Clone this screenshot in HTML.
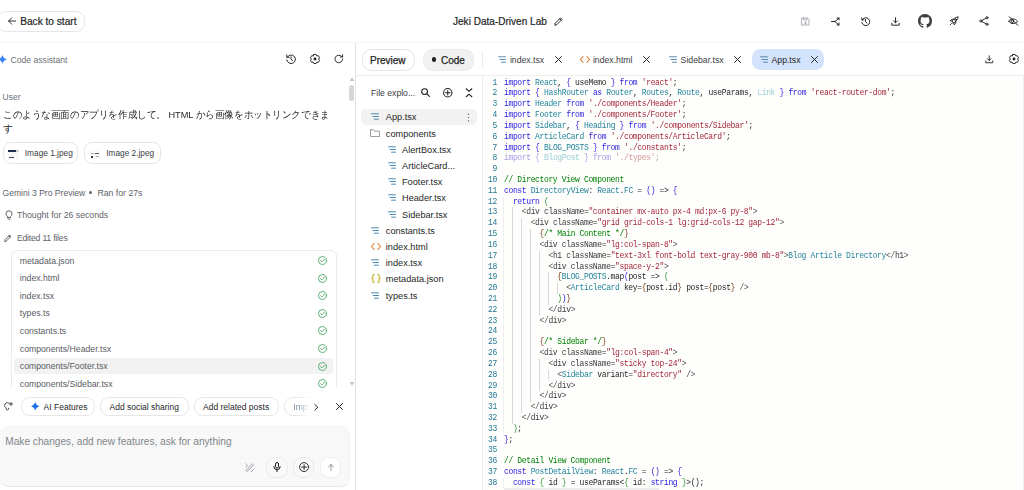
<!DOCTYPE html>
<html><head><meta charset="utf-8">
<style>
*{box-sizing:border-box;margin:0;padding:0}
html,body{width:1024px;height:490px;overflow:hidden;background:#fff;font-family:"Liberation Sans",sans-serif;color:#1f1f1f}
.a{position:absolute}
svg{position:absolute;display:block;overflow:visible}
.ic{fill:none;stroke:#1f1f1f;stroke-width:0.95;stroke-linecap:round;stroke-linejoin:round}
.t{position:absolute;white-space:pre;line-height:1}
.chip{position:absolute;border:1px solid #e6e6e6;border-radius:9.5px;background:#fff}
/* left file list */
.fr{position:absolute;left:19.8px;font-size:8.7px;color:#585c61;white-space:pre;line-height:1}
.ck{position:absolute;left:318px}
/* tree */
.tr{position:absolute;font-size:9.2px;color:#1f1f1f;white-space:pre;line-height:1}
/* code */
#code{position:absolute;left:483px;top:77.7px;width:541px;height:414px;font-family:"Liberation Mono",monospace;font-size:8px;letter-spacing:-0.36px}
.ln,.cl{transform:scale(1,1.06);transform-origin:0 60%}
.ln{position:absolute;left:0;width:14px;text-align:right;color:#237893}
.cl{position:absolute;left:21px;white-space:pre;color:#1f1f1f}
.k{color:#2f22e0}.i{color:#23839a}.s{color:#a3273a}.c{color:#008000}.tg{color:#555}.b1{color:#319331}.b2{color:#2f22e0}.b3{color:#7b3814}.at{color:#3b3b3b}
.fk{color:#a99ee8}.fi{color:#9ccfd4}.fb{color:#a99ee8}.fs{color:#d49a9a}.fp{color:#999}
.g{position:absolute;width:1px;background:#d8d8d8}.g0{background:#efefef}
</style></head><body>

<!-- ================= HEADER ================= -->
<div class="a" style="left:0;top:42px;width:1024px;height:1px;background:#f6f6f6"></div>
<div class="chip" style="left:-3px;top:10.5px;width:88.3px;height:21.2px;border-radius:9px"></div>
<svg class="ic" style="left:7.5px;top:17px;stroke-width:1;stroke:#333" width="8" height="8" viewBox="0 0 8 8"><path d="M7.6 4H0.6M3.8 0.8L0.6 4L3.8 7.2"/></svg>
<div class="t" style="left:20.2px;top:16.5px;font-size:10.15px;-webkit-text-stroke:0.2px #1f1f1f">Back to start</div>
<div class="t" style="left:453px;top:16.5px;font-size:10.05px;-webkit-text-stroke:0.2px #1f1f1f">Jeki Data-Driven Lab</div>
<svg class="ic" style="left:553.5px;top:17px" width="9" height="9" viewBox="0 0 9 9"><path d="M1 8L1.3 6.2L6.6 0.9L8.1 2.4L2.8 7.7Z M5.6 1.9L7.1 3.4"/></svg>

<!-- header right icons -->
<svg class="ic" style="left:801px;top:16.5px;stroke:#a8abb0" width="9" height="9" viewBox="0 0 9 9"><path d="M1 1H6.5L8 2.5V8H1Z M2.5 1V3H6V1 M4.5 5V7 M3.5 6H5.5"/></svg>
<svg class="ic" style="left:830.5px;top:16.5px" width="9" height="9" viewBox="0 0 9 9"><path d="M0.5 4.5H4L8 1 M8 8L4 4.5 M6 1H8V3 M8 6V8H6"/></svg>
<svg class="ic" style="left:860.5px;top:16.5px" width="9" height="9" viewBox="0 0 9 9"><path d="M1.2 2.8A4 4 0 1 1 0.8 5.5 M0.8 0.8V2.9H2.9 M4.5 2.5V4.7L6 6"/></svg>
<svg class="ic" style="left:890.5px;top:16.5px" width="9" height="9" viewBox="0 0 9 9"><path d="M4.5 0.8V5.8 M2.5 3.8L4.5 5.8L6.5 3.8 M0.8 6.3V8.2H8.2V6.3"/></svg>
<svg style="left:917.8px;top:14.3px" width="14" height="14" viewBox="0 0 16 16"><path fill="#3c4043" d="M8 0C3.58 0 0 3.58 0 8c0 3.54 2.29 6.53 5.47 7.59.4.07.55-.17.55-.38 0-.19-.01-.82-.01-1.49-2.01.37-2.53-.49-2.69-.94-.09-.23-.48-.94-.82-1.13-.28-.15-.68-.52-.01-.53.63-.01 1.08.58 1.23.82.72 1.21 1.87.87 2.33.66.07-.52.28-.87.51-1.07-1.780-.2-3.64-.89-3.64-3.95 0-.87.31-1.59.82-2.15-.08-.2-.36-1.02.08-2.12 0 0 .67-.21 2.2.82.64-.18 1.320-.27 2-.27.68 0 1.36.09 2 .27 1.53-1.04 2.2-.82 2.2-.82.44 1.1.16 1.92.08 2.12.51.56.82 1.27.82 2.15 0 3.070-1.87 3.75-3.65 3.95.29.25.54.73.54 1.48 0 1.07-.01 1.93-.01 2.2 0 .21.15.46.55.38A8.013 8.013 0 0016 8c0-4.420-3.58-8-8-8z"/></svg>
<svg class="ic" style="left:949.3px;top:16.2px;stroke-width:0.9" width="10" height="10" viewBox="0 0 10 10"><path d="M3.6 6.5L3 5.9C4 3.3 6 1.3 9.2 0.8C8.7 4 6.7 6 4.2 7.1Z M3.3 5.1L1.3 4.9L2.7 3.3L4.7 3.2 M4.9 6.8L5.1 8.8L6.7 7.4L6.8 5.4 M2.5 7.5L1.1 8.9"/><circle cx="6.4" cy="3.6" r="0.85"/></svg>
<svg class="ic" style="left:978.6px;top:16.4px;stroke-width:0.9" width="10" height="10" viewBox="0 0 10 10"><circle cx="7.9" cy="1.7" r="1.1"/><circle cx="1.9" cy="5" r="1.1"/><circle cx="7.9" cy="8.3" r="1.1"/><path d="M2.9 4.4L6.9 2.3 M2.9 5.6L6.9 7.7"/></svg>
<svg class="ic" style="left:1008.3px;top:16.3px;stroke-width:1" width="11" height="10" viewBox="0 0 11 10"><path d="M1.3 0.8L9.8 9.3"/><path d="M0.8 5.2C1.6 3.8 3.2 2.9 5 2.9C6.9 2.9 8.6 3.9 9.5 5.3C9.1 6 8.6 6.5 8 6.9 M6.5 7.4C6 7.5 5.5 7.6 5 7.6C3.2 7.6 1.6 6.6 0.8 5.2"/><circle cx="4.3" cy="5.2" r="1.4"/></svg>

<!-- ================= LEFT PANEL ================= -->
<div class="a" style="left:355px;top:43px;width:1px;height:447px;background:#e3e3e3"></div>
<svg style="left:-2.4px;top:54.9px" width="8.8" height="8.8" viewBox="0 0 8 8"><path fill="#3b82f6" d="M4 0C4.7 2.1 5.9 3.3 8 4C5.9 4.7 4.7 5.9 4 8C3.3 5.9 2.1 4.7 0 4C2.1 3.3 3.3 2.1 4 0Z"/></svg>
<div class="t" style="left:10.6px;top:55.5px;font-size:8.6px;color:#6c7075">Code assistant</div>
<svg class="ic" style="left:285.7px;top:54.3px" width="10" height="10" viewBox="0 0 10 10"><path d="M1.3 3.2A4.3 4.3 0 1 1 0.8 5.8 M0.8 1V3.3H3.1 M5 2.8V5.2L6.6 6.6"/></svg>
<svg class="ic" style="left:309.7px;top:54.3px" width="10" height="10" viewBox="0 0 10 10"><path stroke-width="0.95" d="M3.86 0.44 L6.14 0.44 L6.80 1.88 L8.38 1.74 L9.52 3.70 L8.60 5.00 L9.52 6.30 L8.38 8.26 L6.80 8.12 L6.14 9.56 L3.86 9.56 L3.20 8.12 L1.62 8.26 L0.48 6.30 L1.40 5.00 L0.48 3.70 L1.62 1.74 L3.20 1.88Z"/><circle cx="5" cy="5" r="1.45" fill="#1f1f1f" stroke="none"/></svg>
<svg class="ic" style="left:334.3px;top:54.3px" width="10" height="10" viewBox="0 0 10 10"><path d="M8.6 5A3.8 3.8 0 1 1 7.5 2.3 M8.6 0.8V3H6.4"/></svg>

<!-- scrollbar -->
<svg style="left:348.5px;top:77px" width="6" height="5" viewBox="0 0 6 5"><path fill="#c4c4c4" d="M3 0.5L5.5 4H0.5Z"/></svg>
<div class="a" style="left:349px;top:85.4px;width:5px;height:15.3px;border-radius:3px;background:#d6d6d6"></div>
<svg style="left:348.5px;top:381.3px" width="6" height="5" viewBox="0 0 6 5"><path fill="#c4c4c4" d="M0.5 1H5.5L3 4.5Z"/></svg>

<div class="t" style="left:2.6px;top:92.8px;font-size:8.5px;color:#6b7280">User</div>
<div class="t" style="left:3px;top:110.3px;font-size:9.6px;transform:scaleX(0.958);transform-origin:0 0;color:#1f1f1f">このような画面のアプリを作成して。 HTML から画像をホットリンクできま</div>
<div class="t" style="left:3px;top:123.5px;font-size:9.6px;color:#1f1f1f">す</div>

<div class="chip" style="left:2.6px;top:142.2px;width:75.4px;height:22.2px;border-radius:8px"></div>
<div class="a" style="left:7.7px;top:149.8px;width:11.4px;height:9.2px;background:#f6f6f6"><div class="a" style="left:0;top:0;width:8.8px;height:2.7px;background:#1d2b4f"></div><div class="a" style="left:8.8px;top:0.5px;width:2.6px;height:1.5px;background:#c9ccd2"></div><div class="a" style="left:1.5px;top:7px;width:5px;height:1.2px;background:#3b4a6b"></div></div>
<div class="t" style="left:24.8px;top:149.2px;font-size:8.3px;color:#3c4043">Image 1.jpeg</div>
<div class="chip" style="left:84.4px;top:142.2px;width:77.1px;height:22.2px;border-radius:8px"></div>
<div class="a" style="left:90.2px;top:149.8px;width:10.2px;height:9.2px;background:#fafafa"><div class="a" style="left:0.5px;top:3.5px;width:3px;height:1px;background:#9aa"></div><div class="a" style="left:5px;top:3px;width:4px;height:1.5px;background:#556"></div><div class="a" style="left:0.5px;top:6.5px;width:2px;height:2px;background:#334"></div><div class="a" style="left:6px;top:6.5px;width:3px;height:1px;background:#aab"></div></div>
<div class="t" style="left:106.2px;top:149.2px;font-size:8.3px;color:#3c4043">Image 2.jpeg</div>

<div class="t" style="left:2.6px;top:188.6px;font-size:8.55px;color:#5f6368">Gemini 3 Pro Preview</div>
<div class="a" style="left:89.2px;top:190.6px;width:3px;height:3px;border-radius:2px;background:#5f6368"></div>
<div class="t" style="left:97.5px;top:188.6px;font-size:8.7px;color:#5f6368">Ran for 27s</div>
<svg class="ic" style="left:4.6px;top:209.5px;stroke:#5f6368;stroke-width:1" width="8" height="10" viewBox="0 0 8 10"><path d="M2.5 6.5C1.5 5.8 1 4.8 1 3.8A3 3 0 0 1 7 3.8C7 4.8 6.5 5.8 5.5 6.5V7.5H2.5Z M3 9H5"/></svg>
<div class="t" style="left:16.9px;top:210.8px;font-size:8.7px;color:#5f6368">Thought for 26 seconds</div>
<svg class="ic" style="left:4.3px;top:233.5px;stroke:#5f6368;stroke-width:1" width="8" height="8" viewBox="0 0 8 8"><path d="M0.8 7.2L1 5.7L5.7 1L7 2.3L2.3 7Z M4.8 1.9L6.1 3.2"/></svg>
<div class="t" style="left:16.9px;top:233.5px;font-size:8.7px;letter-spacing:-0.22px;color:#5f6368">Edited 11 files</div>

<!-- file list box (clipped) -->
<div class="a" style="left:0;top:243px;width:348px;height:145px;overflow:hidden">
  <div class="a" style="left:11.4px;top:6.5px;width:325.8px;height:200px;border:1px solid #ebebeb;border-radius:6px"></div>
  <div class="a" style="left:14px;top:114.9px;width:319px;height:15.8px;border-radius:3px;background:#f2f2f2"></div>
  <div class="fr" style="top:13.50px">metadata.json</div>
<svg class="ic ck" style="left:318px;top:13.00px;stroke:#3fa45b;stroke-width:0.85" width="9" height="9" viewBox="0 0 9 9"><circle cx="4.5" cy="4.5" r="4"/><path d="M2.6 4.6L3.9 5.9L6.4 3.3"/></svg>
<div class="fr" style="top:31.12px">index.html</div>
<svg class="ic ck" style="left:318px;top:30.62px;stroke:#3fa45b;stroke-width:0.85" width="9" height="9" viewBox="0 0 9 9"><circle cx="4.5" cy="4.5" r="4"/><path d="M2.6 4.6L3.9 5.9L6.4 3.3"/></svg>
<div class="fr" style="top:48.74px">index.tsx</div>
<svg class="ic ck" style="left:318px;top:48.24px;stroke:#3fa45b;stroke-width:0.85" width="9" height="9" viewBox="0 0 9 9"><circle cx="4.5" cy="4.5" r="4"/><path d="M2.6 4.6L3.9 5.9L6.4 3.3"/></svg>
<div class="fr" style="top:66.36px">types.ts</div>
<svg class="ic ck" style="left:318px;top:65.86px;stroke:#3fa45b;stroke-width:0.85" width="9" height="9" viewBox="0 0 9 9"><circle cx="4.5" cy="4.5" r="4"/><path d="M2.6 4.6L3.9 5.9L6.4 3.3"/></svg>
<div class="fr" style="top:83.98px">constants.ts</div>
<svg class="ic ck" style="left:318px;top:83.48px;stroke:#3fa45b;stroke-width:0.85" width="9" height="9" viewBox="0 0 9 9"><circle cx="4.5" cy="4.5" r="4"/><path d="M2.6 4.6L3.9 5.9L6.4 3.3"/></svg>
<div class="fr" style="top:101.60px">components/Header.tsx</div>
<svg class="ic ck" style="left:318px;top:101.10px;stroke:#3fa45b;stroke-width:0.85" width="9" height="9" viewBox="0 0 9 9"><circle cx="4.5" cy="4.5" r="4"/><path d="M2.6 4.6L3.9 5.9L6.4 3.3"/></svg>
<div class="fr" style="top:119.22px">components/Footer.tsx</div>
<svg class="ic ck" style="left:318px;top:118.72px;stroke:#3fa45b;stroke-width:0.85" width="9" height="9" viewBox="0 0 9 9"><circle cx="4.5" cy="4.5" r="4"/><path d="M2.6 4.6L3.9 5.9L6.4 3.3"/></svg>
<div class="fr" style="top:136.84px">components/Sidebar.tsx</div>
<svg class="ic ck" style="left:318px;top:136.34px;stroke:#3fa45b;stroke-width:0.85" width="9" height="9" viewBox="0 0 9 9"><circle cx="4.5" cy="4.5" r="4"/><path d="M2.6 4.6L3.9 5.9L6.4 3.3"/></svg>
<div class="fr" style="top:154.46px">components/ArticleCard.tsx</div>
<svg class="ic ck" style="left:318px;top:153.96px;stroke:#3fa45b;stroke-width:0.85" width="9" height="9" viewBox="0 0 9 9"><circle cx="4.5" cy="4.5" r="4"/><path d="M2.6 4.6L3.9 5.9L6.4 3.3"/></svg>
<div class="fr" style="top:172.08px">components/AlertBox.tsx</div>
<svg class="ic ck" style="left:318px;top:171.58px;stroke:#3fa45b;stroke-width:0.85" width="9" height="9" viewBox="0 0 9 9"><circle cx="4.5" cy="4.5" r="4"/><path d="M2.6 4.6L3.9 5.9L6.4 3.3"/></svg>
<div class="fr" style="top:189.70px">App.tsx</div>
<svg class="ic ck" style="left:318px;top:189.20px;stroke:#3fa45b;stroke-width:0.85" width="9" height="9" viewBox="0 0 9 9"><circle cx="4.5" cy="4.5" r="4"/><path d="M2.6 4.6L3.9 5.9L6.4 3.3"/></svg>
</div>

<!-- suggestions -->
<svg class="ic" style="left:4px;top:402px;stroke:#444746;stroke-width:1" width="9" height="9" viewBox="0 0 9 9"><path d="M1.5 5.5C0.8 4.9 0.6 4.2 0.6 3.6A2.8 2.8 0 0 1 5.2 1.3 M2.2 6.2V7.2L3.4 8.2L4.6 7.2V6.2 M7 0.5V3.5 M5.5 2H8.5"/></svg>
<div class="chip" style="left:21px;top:397px;width:74px;height:18.7px;border-radius:8.5px"></div>
<svg style="left:30.7px;top:402.2px" width="8.4" height="8.4" viewBox="0 0 8 8"><path fill="#1a73e8" d="M4 0C4.7 2.1 5.9 3.3 8 4C5.9 4.7 4.7 5.9 4 8C3.3 5.9 2.1 4.7 0 4C2.1 3.3 3.3 2.1 4 0Z"/></svg>
<div class="t" style="left:43.6px;top:403.2px;font-size:8.5px;color:#1f1f1f">AI Features</div>
<div class="chip" style="left:100.2px;top:397px;width:88.4px;height:18.7px;border-radius:8.5px"></div>
<div class="t" style="left:109.5px;top:403px;font-size:8.5px;color:#1f1f1f">Add social sharing</div>
<div class="chip" style="left:194.1px;top:397px;width:84.5px;height:18.7px;border-radius:8.5px"></div>
<div class="t" style="left:203px;top:403px;font-size:8.5px;color:#1f1f1f">Add related posts</div>
<div class="a" style="left:284.3px;top:397.3px;width:26px;height:18.4px;overflow:hidden;-webkit-mask-image:linear-gradient(90deg,#000 55%,transparent 100%)"><div class="chip" style="left:0;top:0;width:80px;height:18.4px;border-radius:8.5px"></div><div class="t" style="left:9px;top:5.8px;font-size:8.5px;color:#7c8dab">Improve</div></div>
<svg class="ic" style="left:314px;top:403.6px;stroke-width:0.95" width="4.5" height="6.5" viewBox="0 0 4.5 6.5"><path d="M0.8 0.5L3.8 3.25L0.8 6"/></svg>
<svg class="ic" style="left:335.6px;top:403.2px;stroke-width:1" width="7" height="7" viewBox="0 0 7 7"><path d="M0.5 0.5L6.5 6.5M6.5 0.5L0.5 6.5"/></svg>

<!-- input box -->
<div class="a" style="left:-1px;top:425.9px;width:350.7px;height:61.2px;border:1px solid #f4f4f4;border-bottom-color:#e6e6e6;border-radius:9px;background:#f8f8f8"></div>
<div class="t" style="left:5.3px;top:437px;font-size:10.15px;color:#80868b">Make changes, add new features, ask for anything</div>
<svg class="ic" style="left:245.2px;top:462.6px;stroke:#9aa0a6;stroke-width:1" width="9.5" height="9.5" viewBox="0 0 10 10"><path d="M2 9.2L9.2 2 M0.8 8L8 0.8 M0.8 0.8L1.8 1.8 M1 4.2C1.5 3 2.3 2.6 3 3.2 M6.5 9.3L9.3 6.5"/></svg>
<div class="a" style="left:266.4px;top:456.7px;width:21.2px;height:21.3px;border-radius:9px;border:1px solid #e9e9e9;background:#f9f9f9"></div>
<svg class="ic" style="left:272.6px;top:462px;stroke-width:1" width="8" height="10" viewBox="0 0 8 10"><rect x="2.5" y="0.5" width="3" height="5.6" rx="1.5"/><path d="M0.8 4.6A3.2 3.2 0 0 0 7.2 4.6 M4 7.8V9.6"/></svg>
<div class="a" style="left:293.3px;top:456.7px;width:20.8px;height:21.3px;border-radius:9px;border:1px solid #e9e9e9;background:#f9f9f9"></div>
<svg class="ic" style="left:298.6px;top:462px;stroke-width:0.9" width="10.2" height="10.2" viewBox="0 0 10 10"><circle cx="5" cy="5" r="4.4"/><path d="M5 2.6V7.4 M2.6 5H7.4"/></svg>
<div class="a" style="left:319.8px;top:456.7px;width:21.2px;height:21.3px;border-radius:9px;border:1px solid #eeeeee;background:#fff"></div>
<svg class="ic" style="left:327.6px;top:463.6px;stroke:#80868b;stroke-width:0.85" width="6" height="6.5" viewBox="0 0 6 6.5"><path d="M3 6.3V0.5 M0.6 2.8L3 0.5L5.4 2.8"/></svg>

<!-- ================= RIGHT PANEL ================= -->
<div class="a" style="left:356px;top:75px;width:668px;height:1px;background:#ededed"></div>
<div class="chip" style="left:361.5px;top:48.7px;width:53px;height:22px"></div>
<div class="t" style="left:370px;top:55.8px;font-size:10px;-webkit-text-stroke:0.25px #1f1f1f">Preview</div>
<div class="chip" style="left:423.3px;top:48.7px;width:50.4px;height:22px;background:#f1f1f1;border-color:#ebebeb"></div>
<div class="a" style="left:431.7px;top:57.3px;width:4.6px;height:4.6px;border-radius:2.3px;background:#1f1f1f"></div>
<div class="t" style="left:441px;top:55.8px;font-size:10px;-webkit-text-stroke:0.25px #1f1f1f">Code</div>
<div class="a" style="left:482px;top:51px;width:1px;height:17px;background:#ebebeb"></div>

<!-- tabs -->
<svg class="ic" style="left:498px;top:56px;stroke:#5b8db0;stroke-width:1" width="8" height="7" viewBox="0 0 8 7"><path d="M0.5 0.8H7.5 M2 3.5H7.5 M3.5 6.2H7.5"/></svg>
<div class="t" style="left:509.9px;top:55.8px;font-size:8.7px;color:#3c4043">index.tsx</div>
<svg class="ic" style="left:554.5px;top:56.2px;stroke-width:0.95" width="7" height="7" viewBox="0 0 7 7"><path d="M0.5 0.5L6.5 6.5M6.5 0.5L0.5 6.5"/></svg>
<svg class="ic" style="left:579.6px;top:56px;stroke:#e0772f;stroke-width:1.1" width="10" height="7" viewBox="0 0 10 7"><path d="M3 0.5L0.5 3.5L3 6.5 M7 0.5L9.5 3.5L7 6.5"/></svg>
<div class="t" style="left:592.9px;top:55.8px;font-size:8.7px;color:#3c4043">index.html</div>
<svg class="ic" style="left:642.5px;top:56.2px;stroke-width:0.95" width="7" height="7" viewBox="0 0 7 7"><path d="M0.5 0.5L6.5 6.5M6.5 0.5L0.5 6.5"/></svg>
<svg class="ic" style="left:668.6px;top:56px;stroke:#5b8db0;stroke-width:1" width="8" height="7" viewBox="0 0 8 7"><path d="M0.5 0.8H7.5 M2 3.5H7.5 M3.5 6.2H7.5"/></svg>
<div class="t" style="left:680.6px;top:55.8px;font-size:8.7px;color:#3c4043">Sidebar.tsx</div>
<svg class="ic" style="left:733.7px;top:56.2px;stroke-width:0.95" width="7" height="7" viewBox="0 0 7 7"><path d="M0.5 0.5L6.5 6.5M6.5 0.5L0.5 6.5"/></svg>
<div class="a" style="left:752.4px;top:49px;width:71.6px;height:20.8px;border-radius:8.5px;background:#d3e3fd"></div>
<svg class="ic" style="left:760px;top:56px;stroke:#5b8db0;stroke-width:1" width="8" height="7" viewBox="0 0 8 7"><path d="M0.5 0.8H7.5 M2 3.5H7.5 M3.5 6.2H7.5"/></svg>
<div class="t" style="left:771.5px;top:55.8px;font-size:8.7px;color:#1f1f1f">App.tsx</div>
<svg class="ic" style="left:811.1px;top:56.2px;stroke-width:0.95" width="7" height="7" viewBox="0 0 7 7"><path d="M0.5 0.5L6.5 6.5M6.5 0.5L0.5 6.5"/></svg>
<svg class="ic" style="left:985px;top:54.8px" width="8.5" height="8.5" viewBox="0 0 9 9"><path d="M4.5 0.8V5.8 M2.5 3.8L4.5 5.8L6.5 3.8 M0.8 6.3V8.2H8.2V6.3"/></svg>
<svg class="ic" style="left:1008.8px;top:54.3px" width="10" height="10" viewBox="0 0 10 10"><path stroke-width="0.95" d="M3.86 0.44 L6.14 0.44 L6.80 1.88 L8.38 1.74 L9.52 3.70 L8.60 5.00 L9.52 6.30 L8.38 8.26 L6.80 8.12 L6.14 9.56 L3.86 9.56 L3.20 8.12 L1.62 8.26 L0.48 6.30 L1.40 5.00 L0.48 3.70 L1.62 1.74 L3.20 1.88Z"/><circle cx="5" cy="5" r="1.45" fill="#1f1f1f" stroke="none"/></svg>

<!-- file explorer -->
<div class="t" style="left:371px;top:88.6px;font-size:8.65px;color:#3c4043">File explo...</div>
<svg class="ic" style="left:421px;top:88px;stroke-width:1.1" width="9" height="9" viewBox="0 0 9 9"><circle cx="3.6" cy="3.6" r="2.9"/><path d="M5.8 5.8L8.4 8.4"/></svg>
<svg class="ic" style="left:442.5px;top:87.7px;stroke-width:1.1" width="9.5" height="9.5" viewBox="0 0 10 10"><circle cx="5" cy="5" r="4.4"/><path d="M5 2.6V7.4 M2.6 5H7.4"/></svg>
<svg class="ic" style="left:465px;top:87.6px;stroke-width:1.1" width="8" height="9.5" viewBox="0 0 8 10"><path d="M1 0.8L4 3.5L7 0.8 M1 9.2L4 6.5L7 9.2"/></svg>
<div class="a" style="left:361.1px;top:108.9px;width:115.8px;height:15.8px;border-radius:5px;background:#f2f2f2"></div>
<svg class="ic" style="left:371.0px;top:113.30px;stroke:#4d8bb0;stroke-width:1" width="8" height="7" viewBox="0 0 8 7"><path d="M0.5 0.8H7.5 M2 3.5H7.5 M3.5 6.2H7.5"/></svg>
<div class="tr" style="left:385.8px;top:113.40px">App.tsx</div>
<svg class="ic" style="left:370.2px;top:129.00px;stroke:#9aa0a6;stroke-width:1" width="10" height="8" viewBox="0 0 10 8"><path d="M0.5 1.2V7.5H9.5V2.2H4.5L3.5 0.7H0.5Z"/></svg>
<div class="tr" style="left:385.8px;top:129.60px">components</div>
<svg class="ic" style="left:387.7px;top:145.70px;stroke:#4d8bb0;stroke-width:1" width="8" height="7" viewBox="0 0 8 7"><path d="M0.5 0.8H7.5 M2 3.5H7.5 M3.5 6.2H7.5"/></svg>
<div class="tr" style="left:402.0px;top:145.80px">AlertBox.tsx</div>
<svg class="ic" style="left:387.7px;top:161.90px;stroke:#4d8bb0;stroke-width:1" width="8" height="7" viewBox="0 0 8 7"><path d="M0.5 0.8H7.5 M2 3.5H7.5 M3.5 6.2H7.5"/></svg>
<div class="tr" style="left:402.0px;top:162.00px">ArticleCard...</div>
<svg class="ic" style="left:387.7px;top:178.10px;stroke:#4d8bb0;stroke-width:1" width="8" height="7" viewBox="0 0 8 7"><path d="M0.5 0.8H7.5 M2 3.5H7.5 M3.5 6.2H7.5"/></svg>
<div class="tr" style="left:402.0px;top:178.20px">Footer.tsx</div>
<svg class="ic" style="left:387.7px;top:194.30px;stroke:#4d8bb0;stroke-width:1" width="8" height="7" viewBox="0 0 8 7"><path d="M0.5 0.8H7.5 M2 3.5H7.5 M3.5 6.2H7.5"/></svg>
<div class="tr" style="left:402.0px;top:194.40px">Header.tsx</div>
<svg class="ic" style="left:387.7px;top:210.50px;stroke:#4d8bb0;stroke-width:1" width="8" height="7" viewBox="0 0 8 7"><path d="M0.5 0.8H7.5 M2 3.5H7.5 M3.5 6.2H7.5"/></svg>
<div class="tr" style="left:402.0px;top:210.60px">Sidebar.tsx</div>
<svg class="ic" style="left:371.0px;top:226.70px;stroke:#4d8bb0;stroke-width:1" width="8" height="7" viewBox="0 0 8 7"><path d="M0.5 0.8H7.5 M2 3.5H7.5 M3.5 6.2H7.5"/></svg>
<div class="tr" style="left:385.8px;top:226.80px">constants.ts</div>
<svg class="ic" style="left:370.5px;top:242.90px;stroke:#e0772f;stroke-width:1.1" width="10" height="7" viewBox="0 0 10 7"><path d="M3 0.5L0.5 3.5L3 6.5 M7 0.5L9.5 3.5L7 6.5"/></svg>
<div class="tr" style="left:385.8px;top:243.00px">index.html</div>
<svg class="ic" style="left:371.0px;top:259.10px;stroke:#4d8bb0;stroke-width:1" width="8" height="7" viewBox="0 0 8 7"><path d="M0.5 0.8H7.5 M2 3.5H7.5 M3.5 6.2H7.5"/></svg>
<div class="tr" style="left:385.8px;top:259.20px">index.tsx</div>
<svg class="ic" style="left:370.5px;top:274.30px;stroke:#c9b82c;stroke-width:1.2" width="10" height="9" viewBox="0 0 10 9"><path d="M3.2 0.6H2.6C1.6 0.6 1.9 2.4 1.9 3.2C1.9 3.9 1.4 4.5 0.7 4.5C1.4 4.5 1.9 5.1 1.9 5.8C1.9 6.6 1.6 8.4 2.6 8.4H3.2 M6.8 0.6H7.4C8.4 0.6 8.1 2.4 8.1 3.2C8.1 3.9 8.6 4.5 9.3 4.5C8.6 4.5 8.1 5.1 8.1 5.8C8.1 6.6 8.4 8.4 7.4 8.4H6.8"/></svg>
<div class="tr" style="left:385.8px;top:275.40px">metadata.json</div>
<svg class="ic" style="left:371.0px;top:291.50px;stroke:#4d8bb0;stroke-width:1" width="8" height="7" viewBox="0 0 8 7"><path d="M0.5 0.8H7.5 M2 3.5H7.5 M3.5 6.2H7.5"/></svg>
<div class="tr" style="left:385.8px;top:291.60px">types.ts</div>
<svg style="left:467px;top:112.8px" width="3" height="9" viewBox="0 0 3 9"><circle cx="1.5" cy="1.2" r="0.62" fill="#444"/><circle cx="1.5" cy="4.5" r="0.62" fill="#444"/><circle cx="1.5" cy="7.8" r="0.62" fill="#444"/></svg>

<!-- ================= CODE ================= -->
<div class="a" style="left:483px;top:76px;width:541px;height:414px;background:#fefefd"></div>
<div class="a" style="left:1023px;top:76px;width:1px;height:414px;background:#eeeeee"></div>
<div class="a" style="left:482.3px;top:76px;width:1px;height:414px;background:#ededed"></div>
<div id="code">
<div class="ln" style="top:0.00px">1</div>
<div class="cl" style="top:0.00px"><span class="k">import</span> <span class="i">React</span>, <span class="b2">{</span> useMemo <span class="b2">}</span> <span class="k">from</span> <span class="s">&#x27;react&#x27;</span>;</div>
<div class="ln" style="top:10.81px">2</div>
<div class="cl" style="top:10.81px"><span class="k">import</span> <span class="b2">{</span> <span class="i">HashRouter</span> <span class="k">as</span> <span class="i">Router</span>, <span class="i">Routes</span>, <span class="i">Route</span>, useParams, <span class="fi">Link</span> <span class="b2">}</span> <span class="k">from</span> <span class="s">&#x27;react-router-dom&#x27;</span>;</div>
<div class="ln" style="top:21.63px">3</div>
<div class="cl" style="top:21.63px"><span class="k">import</span> <span class="i">Header</span> <span class="k">from</span> <span class="s">&#x27;./components/Header&#x27;</span>;</div>
<div class="ln" style="top:32.45px">4</div>
<div class="cl" style="top:32.45px"><span class="k">import</span> <span class="i">Footer</span> <span class="k">from</span> <span class="s">&#x27;./components/Footer&#x27;</span>;</div>
<div class="ln" style="top:43.26px">5</div>
<div class="cl" style="top:43.26px"><span class="k">import</span> <span class="i">Sidebar</span>, <span class="b2">{</span> <span class="i">Heading</span> <span class="b2">}</span> <span class="k">from</span> <span class="s">&#x27;./components/Sidebar&#x27;</span>;</div>
<div class="ln" style="top:54.07px">6</div>
<div class="cl" style="top:54.07px"><span class="k">import</span> <span class="i">ArticleCard</span> <span class="k">from</span> <span class="s">&#x27;./components/ArticleCard&#x27;</span>;</div>
<div class="ln" style="top:64.89px">7</div>
<div class="cl" style="top:64.89px"><span class="k">import</span> <span class="b2">{</span> <span class="i">BLOG_POSTS</span> <span class="b2">}</span> <span class="k">from</span> <span class="s">&#x27;./constants&#x27;</span>;</div>
<div class="ln" style="top:75.70px">8</div>
<div class="cl" style="top:75.70px"><span class="fk">import</span> <span class="fb">{</span> <span class="fi">BlogPost</span> <span class="fb">}</span> <span class="fk">from</span> <span class="fs">&#x27;./types&#x27;</span><span class="fp">;</span></div>
<div class="ln" style="top:86.52px">9</div>
<div class="cl" style="top:86.52px"></div>
<div class="ln" style="top:97.33px">10</div>
<div class="cl" style="top:97.33px"><span class="c">// Directory View Component</span></div>
<div class="ln" style="top:108.15px">11</div>
<div class="cl" style="top:108.15px"><span class="k">const</span> <span class="i">DirectoryView</span>: <span class="i">React</span>.<span class="i">FC</span> = <span class="b2">()</span> =&gt; <span class="b2">{</span></div>
<div class="ln" style="top:118.96px">12</div>
<div class="cl" style="top:118.96px">  <span class="k">return</span> <span class="b1">(</span></div>
<div class="ln" style="top:129.78px">13</div>
<div class="cl" style="top:129.78px">    <span class="tg">&lt;</span><span class="at">div</span> <span class="at">className</span>=<span class="s">&quot;container mx-auto px-4 md:px-6 py-8&quot;</span><span class="tg">&gt;</span></div>
<div class="ln" style="top:140.59px">14</div>
<div class="cl" style="top:140.59px">      <span class="tg">&lt;</span><span class="at">div</span> <span class="at">className</span>=<span class="s">&quot;grid grid-cols-1 lg:grid-cols-12 gap-12&quot;</span><span class="tg">&gt;</span></div>
<div class="ln" style="top:151.41px">15</div>
<div class="cl" style="top:151.41px">        <span class="b3">{</span><span class="c">/* Main Content */</span><span class="b3">}</span></div>
<div class="ln" style="top:162.22px">16</div>
<div class="cl" style="top:162.22px">        <span class="tg">&lt;</span><span class="at">div</span> <span class="at">className</span>=<span class="s">&quot;lg:col-span-8&quot;</span><span class="tg">&gt;</span></div>
<div class="ln" style="top:173.04px">17</div>
<div class="cl" style="top:173.04px">          <span class="tg">&lt;</span><span class="at">h1</span> <span class="at">className</span>=<span class="s">&quot;text-3xl font-bold text-gray-900 mb-8&quot;</span><span class="tg">&gt;</span><span class="i">Blog Article Directory</span><span class="tg">&lt;/</span><span class="at">h1</span><span class="tg">&gt;</span></div>
<div class="ln" style="top:183.85px">18</div>
<div class="cl" style="top:183.85px">          <span class="tg">&lt;</span><span class="at">div</span> <span class="at">className</span>=<span class="s">&quot;space-y-2&quot;</span><span class="tg">&gt;</span></div>
<div class="ln" style="top:194.67px">19</div>
<div class="cl" style="top:194.67px">            <span class="b3">{</span><span class="i">BLOG_POSTS</span>.map<span class="b2">(</span>post =&gt; <span class="b1">(</span></div>
<div class="ln" style="top:205.48px">20</div>
<div class="cl" style="top:205.48px">              <span class="tg">&lt;</span><span class="i">ArticleCard</span> key=<span class="b3">{</span>post.id<span class="b3">}</span> post=<span class="b3">{</span>post<span class="b3">}</span> <span class="tg">/&gt;</span></div>
<div class="ln" style="top:216.30px">21</div>
<div class="cl" style="top:216.30px">            <span class="b1">)</span><span class="b2">)</span><span class="b3">}</span></div>
<div class="ln" style="top:227.11px">22</div>
<div class="cl" style="top:227.11px">          <span class="tg">&lt;/</span><span class="at">div</span><span class="tg">&gt;</span></div>
<div class="ln" style="top:237.93px">23</div>
<div class="cl" style="top:237.93px">        <span class="tg">&lt;/</span><span class="at">div</span><span class="tg">&gt;</span></div>
<div class="ln" style="top:248.74px">24</div>
<div class="cl" style="top:248.74px"></div>
<div class="ln" style="top:259.56px">25</div>
<div class="cl" style="top:259.56px">        <span class="b3">{</span><span class="c">/* Sidebar */</span><span class="b3">}</span></div>
<div class="ln" style="top:270.38px">26</div>
<div class="cl" style="top:270.38px">        <span class="tg">&lt;</span><span class="at">div</span> <span class="at">className</span>=<span class="s">&quot;lg:col-span-4&quot;</span><span class="tg">&gt;</span></div>
<div class="ln" style="top:281.19px">27</div>
<div class="cl" style="top:281.19px">          <span class="tg">&lt;</span><span class="at">div</span> <span class="at">className</span>=<span class="s">&quot;sticky top-24&quot;</span><span class="tg">&gt;</span></div>
<div class="ln" style="top:292.00px">28</div>
<div class="cl" style="top:292.00px">            <span class="tg">&lt;</span><span class="i">Sidebar</span> variant=<span class="s">&quot;directory&quot;</span> <span class="tg">/&gt;</span></div>
<div class="ln" style="top:302.82px">29</div>
<div class="cl" style="top:302.82px">          <span class="tg">&lt;/</span><span class="at">div</span><span class="tg">&gt;</span></div>
<div class="ln" style="top:313.63px">30</div>
<div class="cl" style="top:313.63px">        <span class="tg">&lt;/</span><span class="at">div</span><span class="tg">&gt;</span></div>
<div class="ln" style="top:324.45px">31</div>
<div class="cl" style="top:324.45px">      <span class="tg">&lt;/</span><span class="at">div</span><span class="tg">&gt;</span></div>
<div class="ln" style="top:335.26px">32</div>
<div class="cl" style="top:335.26px">    <span class="tg">&lt;/</span><span class="at">div</span><span class="tg">&gt;</span></div>
<div class="ln" style="top:346.08px">33</div>
<div class="cl" style="top:346.08px">  <span class="b1">)</span>;</div>
<div class="ln" style="top:356.89px">34</div>
<div class="cl" style="top:356.89px"><span class="b2">}</span>;</div>
<div class="ln" style="top:367.71px">35</div>
<div class="cl" style="top:367.71px"></div>
<div class="ln" style="top:378.52px">36</div>
<div class="cl" style="top:378.52px"><span class="c">// Detail View Component</span></div>
<div class="ln" style="top:389.34px">37</div>
<div class="cl" style="top:389.34px"><span class="k">const</span> <span class="i">PostDetailView</span>: <span class="i">React</span>.<span class="i">FC</span> = <span class="b2">()</span> =&gt; <span class="b2">{</span></div>
<div class="ln" style="top:400.15px">38</div>
<div class="cl" style="top:400.15px">  <span class="k">const</span> <span class="b1">{</span> id <span class="b1">}</span> = useParams&lt;<span class="b1">{</span> id: <span class="k">string</span> <span class="b1">}</span>&gt;();</div>
<div class="g g0" style="left:20.2px;top:118.96px;height:237.93px"></div>
<div class="g g0" style="left:20.2px;top:400.15px;height:10.81px"></div>
<div class="g" style="left:29.1px;top:129.78px;height:216.30px"></div>
<div class="g" style="left:38.0px;top:140.59px;height:194.67px"></div>
<div class="g" style="left:46.8px;top:151.41px;height:173.04px"></div>
<div class="g" style="left:55.7px;top:173.04px;height:64.89px"></div>
<div class="g" style="left:55.7px;top:281.19px;height:32.45px"></div>
<div class="g" style="left:64.6px;top:194.67px;height:32.45px"></div>
<div class="g" style="left:64.6px;top:292.00px;height:10.81px"></div>
<div class="g" style="left:73.5px;top:205.48px;height:10.81px"></div>
</div>
<div class="a" style="left:503.6px;top:487.5px;width:155px;height:3px;background:#ececec"></div>

</body></html>
